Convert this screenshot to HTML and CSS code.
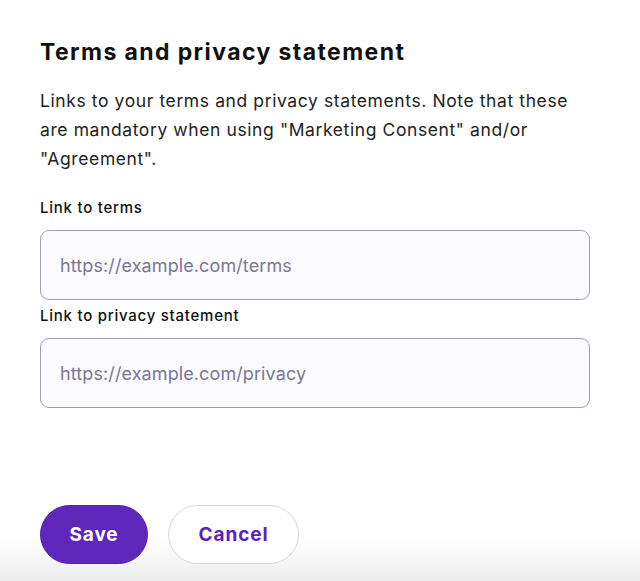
FILE: index.html
```html
<!DOCTYPE html>
<html lang="en">
<head>
<meta charset="utf-8">
<title>Terms and privacy statement</title>
<link rel="stylesheet" href="styles.css">
</head>
<body>
<main class="page">
  <section class="panel">
    <h1 class="title">Terms and privacy statement</h1>
    <p class="desc">Links to your terms and privacy statements. Note that these are mandatory when using "Marketing Consent" and/or "Agreement".</p>
    <div class="fields">
      <label class="field">
        <span class="label">Link to terms</span>
        <input class="input" type="text" placeholder="https://example.com/terms">
      </label>
      <label class="field">
        <span class="label">Link to privacy statement</span>
        <input class="input" type="text" placeholder="https://example.com/privacy">
      </label>
    </div>
  </section>
  <footer class="actions">
    <button class="btn btn-primary" type="button">Save</button>
    <button class="btn btn-secondary" type="button">Cancel</button>
  </footer>
</main>
</body>
</html>
```
FILE: styles.css
```css
* { box-sizing: border-box; }
html, body { margin: 0; padding: 0; }
body {
  font-family: Inter, "Noto Sans", sans-serif;
  color: #1c1c1f;
  background: #fff;
}
.page {
  min-height: 581px;
  padding: 38px 50px 0 40px;
  display: flex;
  flex-direction: column;
  background: linear-gradient(to bottom, #fff 0, #fff 540px, #ececec 581px);
}
.panel { display: flex; flex-direction: column; }
.title {
  margin: 0;
  font-size: 23px;
  line-height: 28px;
  font-weight: 700;
  color: #111;
  letter-spacing: 1.4px;
}
.desc {
  margin: 20px 0 0;
  font-size: 17.5px;
  line-height: 29px;
  color: #222;
  letter-spacing: 0.6px;
  max-width: 550px;
}
.fields {
  margin-top: 25px;
  display: flex;
  flex-direction: column;
  gap: 6px;
}
.field { display: flex; flex-direction: column; gap: 12px; }
.label {
  font-size: 15px;
  line-height: 20px;
  font-weight: 500;
  color: #111;
  letter-spacing: 0.75px;
}
.input {
  width: 550px;
  height: 70px;
  border: 1px solid #a19db6;
  border-radius: 9px;
  background: #fbfaff;
  padding: 0 19px;
  font-family: inherit;
  font-size: 18px;
  letter-spacing: 0.1px;
  color: #222;
  outline: none;
}
.input::placeholder { color: #7b7793; }
.actions {
  margin-top: 97px;
  display: flex;
  gap: 20px;
}
.btn {
  height: 59px;
  border-radius: 30px;
  font-family: inherit;
  font-size: 19px;
  font-weight: 700;
  letter-spacing: 0.9px;
  cursor: pointer;
}
.btn-primary {
  width: 108px;
  background: #5f27b9;
  border: 1px solid #5320a8;
  color: #fff;
}
.btn-secondary {
  width: 131px;
  background: #fff;
  border: 1px solid #d9d3ea;
  color: #5a1fc0;
}
```
